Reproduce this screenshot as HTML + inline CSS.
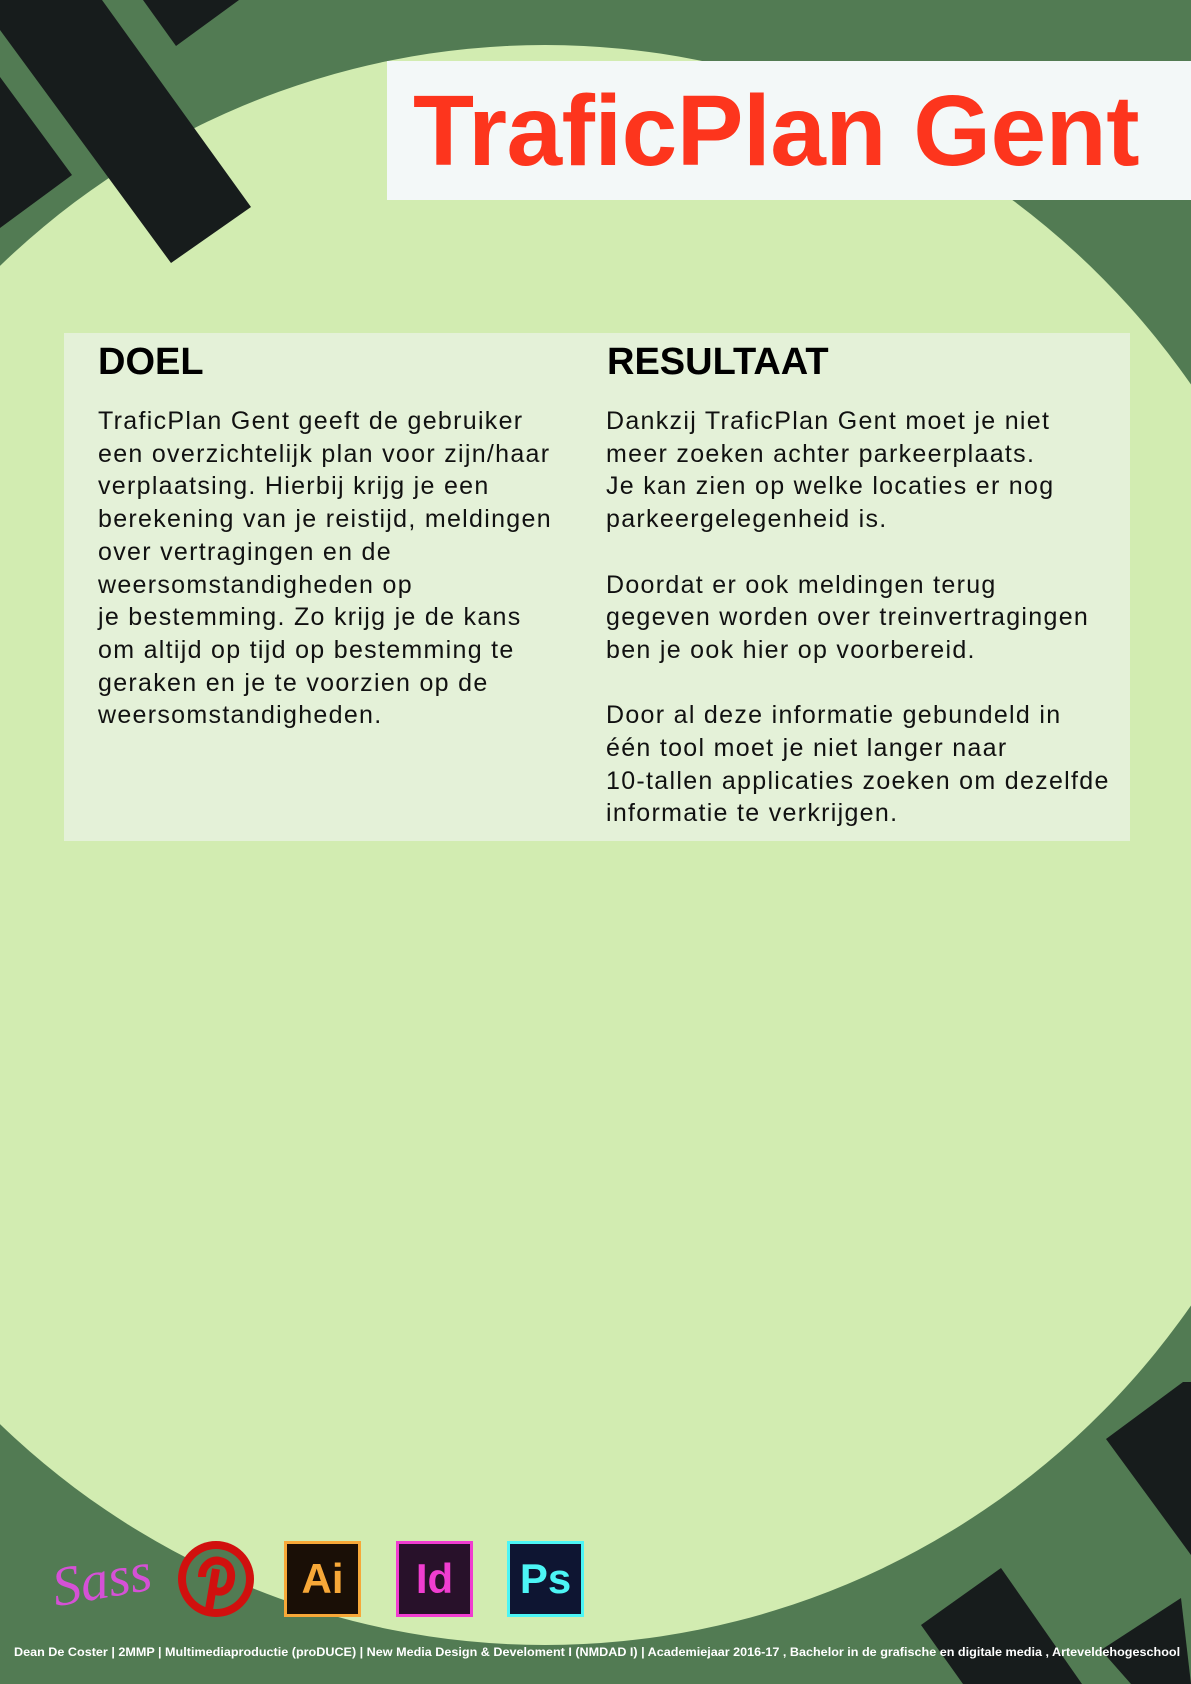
<!DOCTYPE html>
<html><head><meta charset="utf-8"><style>
html,body{margin:0;padding:0}
body{width:1191px;height:1684px;position:relative;overflow:hidden;background:#527b53;font-family:"Liberation Sans",sans-serif}
svg.bg{position:absolute;left:0;top:0}
.title{position:absolute;left:387px;top:61px;width:804px;height:139px;background:#f3f8f8}
.title span{position:absolute;left:26px;top:10px;font-size:100px;font-weight:bold;color:#fd351d;line-height:120px;white-space:nowrap;letter-spacing:-0.5px}
.box{position:absolute;left:64px;top:333px;width:1066px;height:508px;background:#e4f1d8}
h2{position:absolute;margin:0;font-size:38px;font-weight:bold;color:#000;top:342px;line-height:40px}
.txt{position:absolute;top:405px;font-size:25px;line-height:32.7px;color:#111;white-space:nowrap;letter-spacing:1.3px}
.foot{position:absolute;left:14px;top:1645px;font-size:12px;font-weight:bold;color:#fff;white-space:nowrap;transform-origin:0 0;transform:scaleX(1.05)}
.ico{position:absolute;top:1541px;width:71px;height:70px;border:3px solid;font-size:42px;font-weight:bold;text-align:center;line-height:70px}
</style></head><body>
<svg class="bg" width="1191" height="1684" viewBox="0 0 1191 1684">
<ellipse cx="545" cy="845" rx="790" ry="800" fill="#d2ecb1"/>
<g fill="#171c1c">
<polygon points="0,0 102,0 251,207 171,263 0,30"/>
<polygon points="0,77 72,175 0,228"/>
<polygon points="143,0 239,0 176,46"/>
<polygon points="1106,1439 1183,1382 1191,1382 1191,1555"/>
<polygon points="1001,1568 921,1625 963,1684 1082,1684"/>
<polygon points="1181,1598 1101,1650 1131,1684 1191,1684"/>
</g>
</svg>
<div class="title"><span>TraficPlan Gent</span></div>
<div class="box"></div>
<h2 style="left:98px">DOEL</h2>
<h2 style="left:607px">RESULTAAT</h2>
<div class="txt" style="left:98px">TraficPlan Gent geeft de gebruiker<br>een overzichtelijk plan voor zijn/haar<br>verplaatsing. Hierbij krijg je een<br>berekening van je reistijd, meldingen<br>over vertragingen en de<br>weersomstandigheden op<br>je bestemming. Zo krijg je de kans<br>om altijd op tijd op bestemming te<br>geraken en je te voorzien op de<br>weersomstandigheden.</div>
<div class="txt" style="left:606px">Dankzij TraficPlan Gent moet je niet<br>meer zoeken achter parkeerplaats.<br>Je kan zien op welke locaties er nog<br>parkeergelegenheid is.<br><br>Doordat er ook meldingen terug<br>gegeven worden over treinvertragingen<br>ben je ook hier op voorbereid.<br><br>Door al deze informatie gebundeld in<br>één tool moet je niet langer naar<br>10-tallen applicaties zoeken om dezelfde<br>informatie te verkrijgen.</div>

<div style="position:absolute;left:52px;top:1540px;font-family:'Liberation Serif',serif;font-style:italic;font-size:56px;color:#d551d6;line-height:80px;transform:rotate(-10deg)">Sass</div>
<svg style="position:absolute;left:178px;top:1541px" width="76" height="76" viewBox="0 0 76 76">
<circle cx="38" cy="38" r="38" fill="#d1100e"/>
<circle cx="38" cy="38" r="30" fill="#527b53"/>
<path d="M24 36c0-12 10-18 18-16 10 2 13 12 10 22-3 9-12 11-17 6M38 28l-8 46" stroke="#d1100e" stroke-width="8" fill="none"/>
</svg>
<div class="ico" style="left:284px;border-color:#f7a838;background:#1a0f06;color:#f7a838">Ai</div>
<div class="ico" style="left:396px;border-color:#f03dd0;background:#28112a;color:#f03dd0">Id</div>
<div class="ico" style="left:507px;border-color:#4cf5f5;background:#0e1532;color:#4cf5f5">Ps</div>
<div class="foot">Dean De Coster | 2MMP | Multimediaproductie (proDUCE) | New Media Design &amp; Develoment I (NMDAD I) | Academiejaar 2016-17 , Bachelor in de grafische en digitale media , Arteveldehogeschool</div>
</body></html>
